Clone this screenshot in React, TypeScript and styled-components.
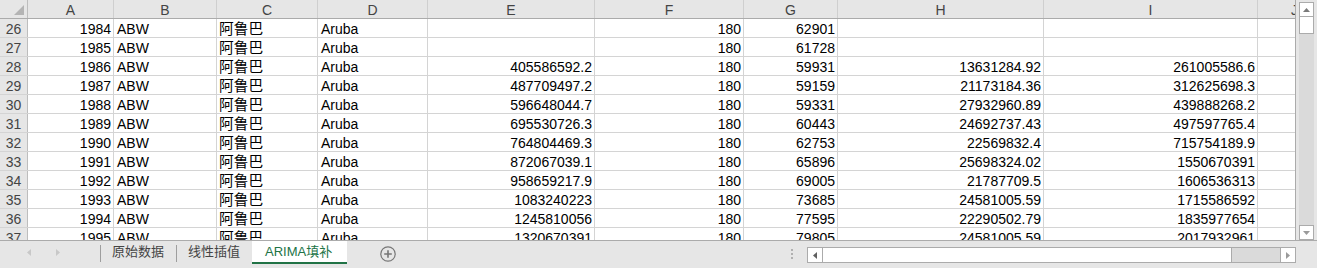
import React from 'react';
import styled, { createGlobalStyle } from 'styled-components';

const COLS = [28, 86, 103, 101, 110, 167, 149, 94, 206, 214, 74];
const TEMPLATE = COLS.map((w) => `${w}px`).join(' ');
const LETTERS = ['A', 'B', 'C', 'D', 'E', 'F', 'G', 'H', 'I', 'J'];
const LEFT_COLS = [2, 3, 4];
const CJK_COL = 3;

const rows: string[][] = [
  ['26', '1984', 'ABW', '阿鲁巴', 'Aruba', '', '180', '62901', '', '', ''],
  ['27', '1985', 'ABW', '阿鲁巴', 'Aruba', '', '180', '61728', '', '', ''],
  ['28', '1986', 'ABW', '阿鲁巴', 'Aruba', '405586592.2', '180', '59931', '13631284.92', '261005586.6', ''],
  ['29', '1987', 'ABW', '阿鲁巴', 'Aruba', '487709497.2', '180', '59159', '21173184.36', '312625698.3', ''],
  ['30', '1988', 'ABW', '阿鲁巴', 'Aruba', '596648044.7', '180', '59331', '27932960.89', '439888268.2', ''],
  ['31', '1989', 'ABW', '阿鲁巴', 'Aruba', '695530726.3', '180', '60443', '24692737.43', '497597765.4', ''],
  ['32', '1990', 'ABW', '阿鲁巴', 'Aruba', '764804469.3', '180', '62753', '22569832.4', '715754189.9', ''],
  ['33', '1991', 'ABW', '阿鲁巴', 'Aruba', '872067039.1', '180', '65896', '25698324.02', '1550670391', ''],
  ['34', '1992', 'ABW', '阿鲁巴', 'Aruba', '958659217.9', '180', '69005', '21787709.5', '1606536313', ''],
  ['35', '1993', 'ABW', '阿鲁巴', 'Aruba', '1083240223', '180', '73685', '24581005.59', '1715586592', ''],
  ['36', '1994', 'ABW', '阿鲁巴', 'Aruba', '1245810056', '180', '77595', '22290502.79', '1835977654', ''],
  ['37', '1995', 'ABW', '阿鲁巴', 'Aruba', '1320670391', '180', '79805', '24581005.59', '2017932961', ''],
];

const GlobalStyle = createGlobalStyle`
  html, body {
    margin: 0;
    padding: 0;
    background: #ffffff;
    overflow: hidden;
  }
`;

const Frame = styled.div`
  width: 1317px;
  height: 268px;
  display: flex;
  flex-direction: column;
  font-family: "Liberation Sans", "Noto Sans CJK SC", sans-serif;
  overflow: hidden;
`;

const Main = styled.div`
  display: flex;
  height: 240px;
`;

const Sheet = styled.div`
  width: 1296px;
  flex-shrink: 0;
  overflow: hidden;
  border-right: 1px solid #ababab;
  box-sizing: border-box;
`;

const HeaderRow = styled.div`
  display: grid;
  grid-template-columns: ${TEMPLATE};
  width: max-content;
  height: 19px;
  background: #e6e6e6;
  border-bottom: 1px solid #ababab;
  box-sizing: border-box;
`;

const Corner = styled.div`
  display: flex;
  justify-content: flex-end;
  align-items: flex-end;
  padding: 0 3px 3px 0;
  border-right: 1px solid #bdbdbd;
  box-sizing: border-box;
`;

const ColHead = styled.div`
  height: 18px;
  padding-top: 2px;
  box-sizing: border-box;
  line-height: 16px;
  font-size: 14px;
  color: #444444;
  text-align: center;
  border-right: 1px solid #cfcfcf;
`;

const Row = styled.div`
  display: grid;
  grid-template-columns: ${TEMPLATE};
  width: max-content;
  height: 19px;
  border-bottom: 1px solid #d4d4d4;
  box-sizing: border-box;
`;

const RowHead = styled.div`
  background: #e6e6e6;
  border-right: 1px solid #bdbdbd;
  padding-top: 3px;
  line-height: 15px;
  font-size: 14px;
  color: #444444;
  text-align: center;
`;

const Cell = styled.div<{ $align: 'left' | 'right'; $cjk?: boolean }>`
  border-right: 1px solid #d4d4d4;
  padding: 3px 2px 0 ${(p) => (p.$cjk ? '2px' : '3px')};
  line-height: 15px;
  font-size: ${(p) => (p.$cjk ? '14.7px' : '14px')};
  color: #000000;
  white-space: nowrap;
  overflow: hidden;
  text-align: ${(p) => p.$align};
`;

const VScroll = styled.div`
  width: 21px;
  padding: 2px 3px 0 3px;
  box-sizing: border-box;
  background: #e6e6e6;
  display: flex;
`;

const VBar = styled.div`
  flex: 1;
  display: flex;
  flex-direction: column;
  background: #dadada;
`;

const ArrowBox = styled.div`
  width: 15px;
  height: 15px;
  background: #ffffff;
  border: 1px solid #ababab;
  box-sizing: border-box;
  display: flex;
  align-items: center;
  justify-content: center;
  flex-shrink: 0;
`;

const VThumb = styled.div`
  height: 17px;
  background: #ffffff;
  border: 1px solid #ababab;
  border-top: none;
  box-sizing: border-box;
`;

const Fill = styled.div`
  flex: 1;
`;

const TabBar = styled.div`
  height: 28px;
  border-top: 1px solid #ababab;
  background: #e6e6e6;
  box-sizing: border-box;
  display: flex;
  align-items: flex-start;
`;

const Nav = styled.div`
  width: 100px;
  display: flex;
  gap: 25px;
  padding: 8px 0 0 27px;
  box-sizing: border-box;
`;

const Separator = styled.div`
  width: 1px;
  height: 17px;
  margin-top: 4px;
  background: #9e9e9e;
`;

const Tab = styled.div<{ $active?: boolean }>`
  height: 23px;
  padding: ${(p) => (p.$active ? '0 15px 0 13px' : '0 12px 0 11px')};
  box-sizing: border-box;
  font-family: "Liberation Sans", "Noto Sans CJK SC", sans-serif;
  font-size: 13px;
  line-height: 21px;
  color: ${(p) => (p.$active ? '#217346' : '#444444')};
  background: ${(p) => (p.$active ? '#ffffff' : 'transparent')};
  border-bottom: 2px solid ${(p) => (p.$active ? '#217346' : 'transparent')};
  white-space: nowrap;
`;

const AddButton = styled.div`
  margin: 5px 0 0 33px;
  width: 16px;
  height: 16px;
  display: flex;
`;

const Splitter = styled.div`
  display: flex;
  flex-direction: column;
  gap: 2px;
  margin: 8px 14px 0 0;
`;

const Dot = styled.div`
  width: 2px;
  height: 2px;
  background: #b0b0b0;
`;

const HScroll = styled.div`
  width: 489px;
  height: 16px;
  margin: 6px 21px 0 0;
  border: 1px solid #ababab;
  box-sizing: border-box;
  background: #dadada;
  display: flex;
`;

const HButton = styled.div<{ $side: 'left' | 'right' }>`
  width: 14px;
  background: #ffffff;
  display: flex;
  align-items: center;
  justify-content: center;
  border-${(p) => (p.$side === 'left' ? 'right' : 'left')}: 1px solid #ababab;
`;

const HThumb = styled.div`
  width: 408px;
  background: #ffffff;
  border-right: 1px solid #ababab;
`;

const Tri = ({ dir, color = '#7a7a7a' }: { dir: 'up' | 'down' | 'left' | 'right'; color?: string }) => {
  const pts = {
    up: '0,4 7,4 3.5,0',
    down: '0,0 7,0 3.5,4',
    left: '4,0 4,7 0,3.5',
    right: '0,0 0,7 4,3.5',
  }[dir];
  const vertical = dir === 'up' || dir === 'down';
  return (
    <svg width={vertical ? 7 : 4} height={vertical ? 4 : 7} viewBox={vertical ? '0 0 7 4' : '0 0 4 7'}>
      <polygon points={pts} fill={color} />
    </svg>
  );
};

export default function App() {
  return (
    <Frame>
      <GlobalStyle />
      <Main>
        <Sheet>
          <HeaderRow>
            <Corner>
              <svg width="10" height="10" viewBox="0 0 10 10">
                <polygon points="10,0 10,10 0,10" fill="#b4b4b4" />
              </svg>
            </Corner>
            {LETTERS.map((l) => (
              <ColHead key={l}>{l}</ColHead>
            ))}
          </HeaderRow>
          {rows.map((r) => (
            <Row key={r[0]}>
              <RowHead>{r[0]}</RowHead>
              {r.slice(1).map((v, i) => (
                <Cell
                  key={i}
                  $align={LEFT_COLS.includes(i + 1) ? 'left' : 'right'}
                  $cjk={i + 1 === CJK_COL}
                >
                  {v}
                </Cell>
              ))}
            </Row>
          ))}
        </Sheet>
        <VScroll>
          <VBar>
            <ArrowBox>
              <Tri dir="up" />
            </ArrowBox>
            <VThumb />
            <Fill />
            <ArrowBox>
              <Tri dir="down" color="#9a9a9a" />
            </ArrowBox>
          </VBar>
        </VScroll>
      </Main>
      <TabBar>
        <Nav>
          <Tri dir="left" color="#c8c8c8" />
          <Tri dir="right" color="#c8c8c8" />
        </Nav>
        <Separator />
        <Tab>原始数据</Tab>
        <Separator />
        <Tab>线性插值</Tab>
        <Tab $active>ARIMA填补</Tab>
        <AddButton>
          <svg width="16" height="16" viewBox="0 0 16 16">
            <circle cx="8" cy="8" r="7.2" fill="none" stroke="#777777" strokeWidth="1.2" />
            <path d="M8 4.2v7.6M4.2 8h7.6" stroke="#777777" strokeWidth="1.6" />
          </svg>
        </AddButton>
        <Fill />
        <Splitter>
          <Dot />
          <Dot />
          <Dot />
        </Splitter>
        <HScroll>
          <HButton $side="left">
            <Tri dir="left" color="#606060" />
          </HButton>
          <HThumb />
          <Fill />
          <HButton $side="right">
            <Tri dir="right" color="#9a9a9a" />
          </HButton>
        </HScroll>
      </TabBar>
    </Frame>
  );
}
